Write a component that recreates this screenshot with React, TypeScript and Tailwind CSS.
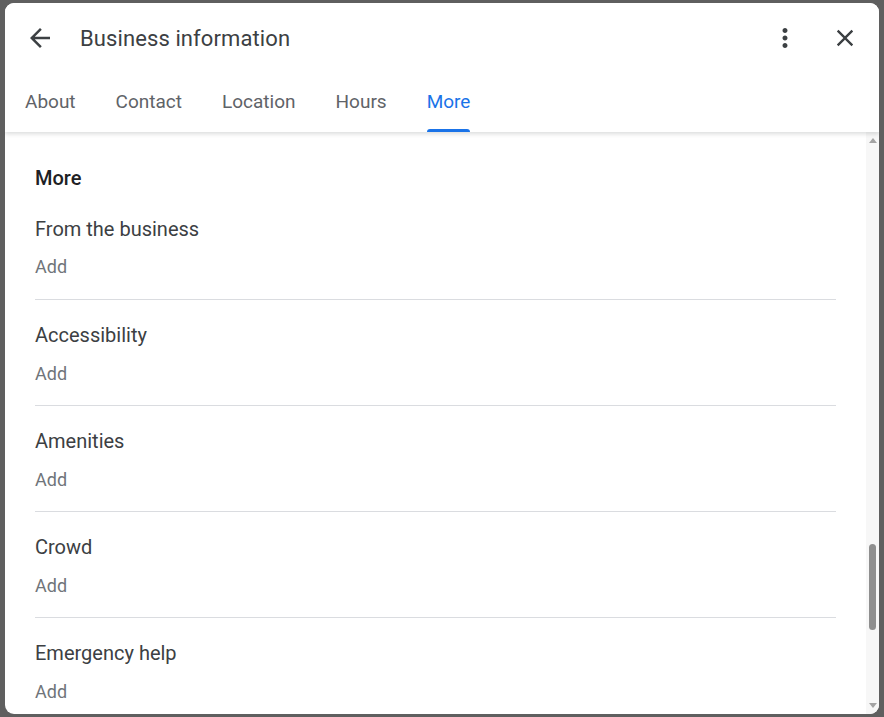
import React from 'react';

const sections = ['From the business', 'Accessibility', 'Amenities', 'Crowd', 'Emergency help'];
const tabs = ['About', 'Contact', 'Location', 'Hours', 'More'];

const App: React.FC = () => {
  return (
    <div
      className="w-full h-[717px] bg-[#5f5f5f] pl-[5px] pt-[3px] overflow-hidden"
      style={{ fontFamily: 'Roboto, "Noto Sans", Arial, sans-serif' }}
    >
      <div className="w-[874px] h-[711px] bg-white rounded-[9px] flex flex-col overflow-hidden">
        {/* header */}
        <div className="relative z-10 shadow-[0_2px_4px_rgba(60,64,67,0.18)] bg-white">
          <div className="h-[70px] flex items-center pl-[20px] pr-[20px]">
            <svg width="30" height="30" viewBox="0 0 24 24" fill="#3c4043">
              <path d="M20 11H7.83l5.59-5.59L12 4l-8 8 8 8 1.41-1.41L7.83 13H20v-2z" />
            </svg>
            <div className="ml-[25px] text-[22px] text-[#3c4043] tracking-[0.1px]">Business information</div>
            <div className="flex-1" />
            <svg width="30" height="30" viewBox="0 0 24 24" fill="#3c4043">
              <path d="M12 8c1.1 0 2-.9 2-2s-.9-2-2-2-2 .9-2 2 .9 2 2 2zm0 2c-1.1 0-2 .9-2 2s.9 2 2 2 2-.9 2-2-.9-2-2-2zm0 6c-1.1 0-2 .9-2 2s.9 2 2 2 2-.9 2-2-.9-2-2-2z" />
            </svg>
            <div className="w-[31px]" />
            <svg width="28" height="28" viewBox="0 0 24 24" fill="#3c4043">
              <path d="M19 6.41L17.59 5 12 10.59 6.41 5 5 6.41 10.59 12 5 17.59 6.41 19 12 13.41 17.59 19 19 17.59 13.41 12z" />
            </svg>
          </div>
          <div className="h-[59px] flex">
            {tabs.map((t) => (
              <div key={t} className="px-[20px] flex flex-col">
                <div
                  className={`flex-1 flex items-center pt-[3px] text-[19px] ${
                    t === 'More' ? 'text-[#1a73e8]' : 'text-[#5f6368]'
                  }`}
                >
                  {t}
                </div>
                <div className={`h-[3px] rounded-t-[3px] ${t === 'More' ? 'bg-[#1a73e8]' : 'bg-transparent'}`} />
              </div>
            ))}
          </div>
        </div>

        {/* body */}
        <div className="flex-1 flex min-h-0">
          <div className="flex-1 px-[30px] pt-[32px] overflow-hidden">
            <div className="h-[28px] flex items-center text-[20px] font-medium text-[#202124]">More</div>
            {sections.map((s, i) => (
              <div
                key={s}
                className={`${i === 0 ? 'pt-[23px] pb-[21px]' : 'pt-[21px] pb-[20px]'} border-b border-[#dadce0]`}
              >
                <div className="h-[28px] flex items-center text-[20px] text-[#3c4043]">{s}</div>
                <div
                  className={`${i === 0 ? 'mt-[11px]' : 'mt-[12px]'} h-[24px] flex items-center text-[18px] text-[#70757a]`}
                >
                  Add
                </div>
              </div>
            ))}
          </div>
          {/* scrollbar */}
          <div className="w-[13px] bg-[#f7f7f7] flex flex-col items-center">
            <div className="h-[17px] flex items-center justify-center">
              <div className="w-0 h-0 border-l-[4px] border-r-[4px] border-b-[5px] border-l-transparent border-r-transparent border-b-[#a3a3a3]" />
            </div>
            <div className="flex-1 w-full flex justify-center">
              <div className="mt-[395px] w-[7px] h-[86px] rounded-full bg-[#8f8f8f]" />
            </div>
            <div className="h-[17px] flex items-center justify-center">
              <div className="w-0 h-0 border-l-[4px] border-r-[4px] border-t-[5px] border-l-transparent border-r-transparent border-t-[#a3a3a3]" />
            </div>
          </div>
        </div>
      </div>
    </div>
  );
};

export default App;
